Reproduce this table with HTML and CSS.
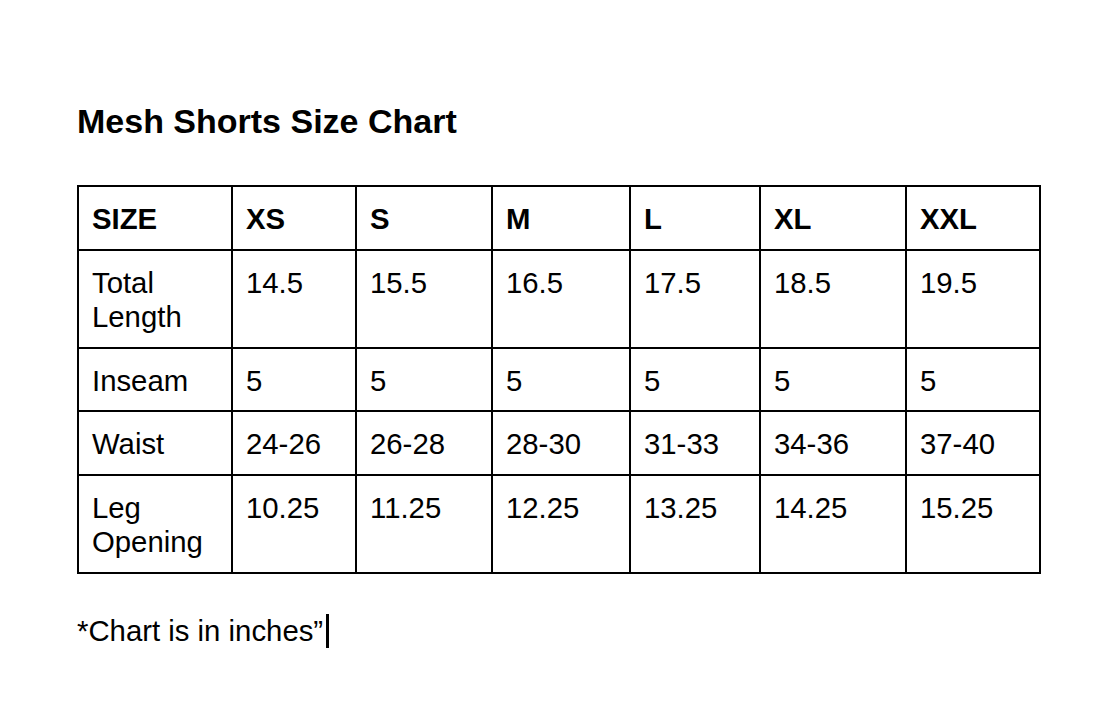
FILE: index.html
```html
<!DOCTYPE html>
<html lang="en">
<head>
<meta charset="utf-8">
<title>Mesh Shorts Size Chart</title>
<link rel="stylesheet" href="styles.css">
</head>
<body>
<main class="doc">
  <h1 class="title">Mesh Shorts Size Chart</h1>
  <table class="chart">
    <colgroup>
      <col class="c-label">
      <col class="c-xs">
      <col class="c-s">
      <col class="c-m">
      <col class="c-l">
      <col class="c-xl">
      <col class="c-xxl">
    </colgroup>
    <thead>
      <tr>
        <th>SIZE</th><th>XS</th><th>S</th><th>M</th><th>L</th><th>XL</th><th>XXL</th>
      </tr>
    </thead>
    <tbody>
      <tr>
        <td>Total<br>Length</td><td>14.5</td><td>15.5</td><td>16.5</td><td>17.5</td><td>18.5</td><td>19.5</td>
      </tr>
      <tr>
        <td>Inseam</td><td>5</td><td>5</td><td>5</td><td>5</td><td>5</td><td>5</td>
      </tr>
      <tr>
        <td>Waist</td><td>24-26</td><td>26-28</td><td>28-30</td><td>31-33</td><td>34-36</td><td>37-40</td>
      </tr>
      <tr>
        <td>Leg<br>Opening</td><td>10.25</td><td>11.25</td><td>12.25</td><td>13.25</td><td>14.25</td><td>15.25</td>
      </tr>
    </tbody>
  </table>
  <p class="note">*Chart is in inches”<span class="cursor"></span></p>
</main>
</body>
</html>
```

FILE: styles.css
```css
html, body {
  margin: 0;
  padding: 0;
  background: #ffffff;
}

body {
  font-family: "Liberation Sans", Arial, sans-serif;
  color: #000000;
}

.doc {
  padding: 102px 0 0 77px;
}

.title {
  margin: 0;
  font-size: 34px;
  font-weight: 700;
  line-height: 1.15;
}

.chart {
  margin-top: 44px;
  border-collapse: collapse;
  table-layout: fixed;
  width: 964px;
  font-size: 29.33px;
  line-height: 34.5px;
}

.c-label { width: 154px; }
.c-xs { width: 124px; }
.c-s { width: 136px; }
.c-m { width: 138px; }
.c-l { width: 130px; }
.c-xl { width: 146px; }
.c-xxl { width: 134px; }

.chart th,
.chart td {
  border: 2px solid #000000;
  padding: 15px 13px 12px 13px;
  text-align: left;
  vertical-align: top;
}

.chart th {
  font-weight: 700;
}

.chart td {
  font-weight: 400;
}

.note {
  margin: 40px 0 0 0;
  font-size: 29.33px;
  line-height: 34px;
  display: flex;
  align-items: stretch;
}

.cursor {
  display: inline-block;
  width: 3px;
  margin-left: 3px;
  background: #000000;
}
```
